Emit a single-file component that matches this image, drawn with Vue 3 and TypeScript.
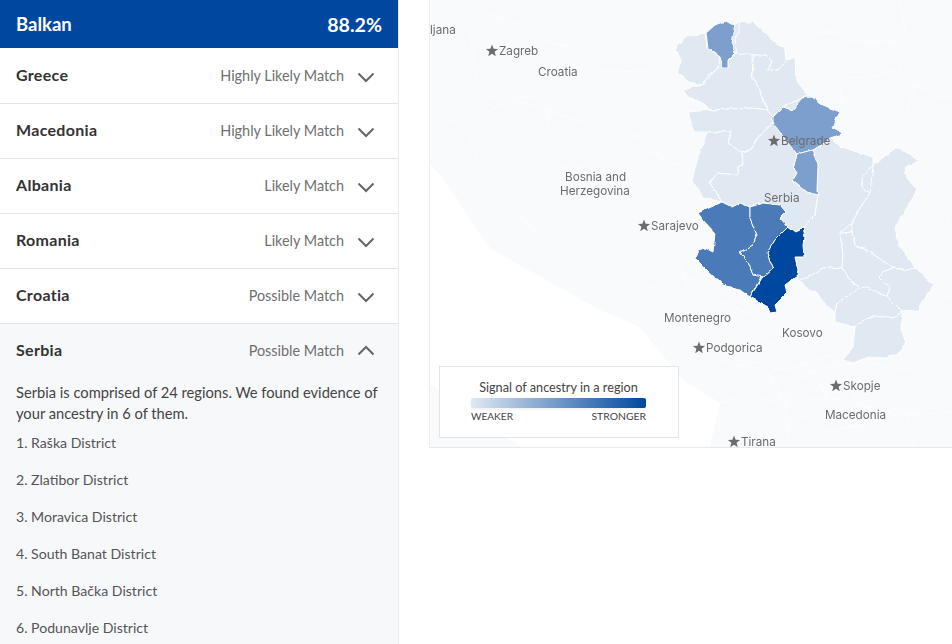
<template>
  <div class="page">
    <!-- 左侧列表 -->
    <aside class="panel">
      <div class="head">
        <span>Balkan</span>
        <span class="pct">88.2%</span>
      </div>
      <div v-for="row in rows" :key="row.name" class="row">
        <span class="name">{{ row.name }}</span>
        <span class="match">{{ row.match }}</span>
        <svg class="chev" width="18" height="11" viewBox="0 0 18 11">
          <path d="M1.5 1.5L9 9l7.5-7.5" />
        </svg>
      </div>
      <div class="open">
        <div class="row row-open">
          <span class="name">Serbia</span>
          <span class="match">Possible Match</span>
          <svg class="chev" width="18" height="11" viewBox="0 0 18 11">
            <path d="M1.5 9.5L9 2l7.5 7.5" />
          </svg>
        </div>
        <p class="intro">Serbia is comprised of 24 regions. We found evidence of your ancestry in 6 of them.</p>
        <ol class="districts">
          <li v-for="(d, i) in districts" :key="d">{{ i + 1 }}. {{ d }}</li>
        </ol>
      </div>
    </aside>

    <!-- 地图 -->
    <section class="map">
      <svg class="map-svg" width="522" height="447" viewBox="430 0 522 447">
        <defs>
          <filter id="wiggle" filterUnits="userSpaceOnUse" x="430" y="0" width="522" height="447" color-interpolation-filters="sRGB">
            <feTurbulence type="fractalNoise" baseFrequency="0.14" numOctaves="2" seed="4" />
            <feDisplacementMap in="SourceGraphic" scale="3.5" xChannelSelector="R" yChannelSelector="G" />
            <feGaussianBlur stdDeviation="0.3" />
          </filter>
        </defs>
        <rect x="430" y="0" width="522" height="447" fill="#f9fafc" />
        <path v-for="(s, i) in sea" :key="i" :d="s" fill="#fff" />
        <g filter="url(#wiggle)">
          <g class="border-lines">
            <polyline v-for="(l, i) in borders" :key="'b' + i" :points="l" class="border-line" />
          </g>
          <polygon :points="outline" :fill="fills.light" />
          <polygon v-for="r in regions" :key="r.id" :points="r.points" :fill="fills[r.level]" class="region" />
        </g>
        <g class="labels">
          <g v-for="c in cities" :key="c.name">
            <polygon :points="starPoints(c.x, c.y)" fill="#6c6c6c" />
            <text :x="c.x + 7" :y="c.y + 4" class="lbl">{{ c.name }}</text>
          </g>
          <text v-for="t in names" :key="t.name" :x="t.x" :y="t.y" class="lbl">{{ t.name }}</text>
          <text x="430" y="34" class="lbl">ljana</text>
        </g>
      </svg>
      <div class="legend">
        <div class="legend-title">Signal of ancestry in a region</div>
        <div class="legend-bar"></div>
        <div class="legend-ends">
          <span class="weaker">WEAKER</span>
          <span>STRONGER</span>
        </div>
      </div>
    </section>
  </div>
</template>

<script setup lang="ts">
interface Row {
  name: string
  match: string
}

interface Region {
  id: string
  level: 'light' | 'mid' | 'strong' | 'top'
  points: string
}

const rows: Row[] = [
  { name: 'Greece', match: 'Highly Likely Match' },
  { name: 'Macedonia', match: 'Highly Likely Match' },
  { name: 'Albania', match: 'Likely Match' },
  { name: 'Romania', match: 'Likely Match' },
  { name: 'Croatia', match: 'Possible Match' }
]

const districts = [
  'Raška District',
  'Zlatibor District',
  'Moravica District',
  'South Banat District',
  'North Bačka District',
  'Podunavlje District'
]

const fills = { light: '#e0e8f2', mid: '#7c9fcd', strong: '#4a7ab8', top: '#00479f' }

// 塞尔维亚整体轮廓，垫在各区下面
const outline =
  '685,37 705,33 715,25 725,21 735,25 740,22 753,22 767,35 785,50 786,60 795,57 796,80 808,95 812,97 823,105 840,112 832,127 843,133 832,138 837,145 857,152 873,157 873,165 893,150 900,148 920,162 908,165 903,173 917,190 910,203 895,227 900,247 915,267 933,285 918,310 902,312 901,330 905,343 900,353 887,358 868,357 853,363 843,360 853,347 855,327 835,322 835,312 825,305 817,293 805,287 799,280 797,276 785,285 787,293 775,305 750,297 740,290 723,285 710,273 695,258 698,250 705,248 713,252 715,233 703,220 698,213 722,202 703,197 692,180 698,157 707,132 693,132 692,125 688,112 710,110 703,103 688,97 683,90 702,85 690,82 677,73 682,60 675,50'

const regions: Region[] = [
  { id: 'westBacka', level: 'light', points: '675,50 685,37 705,33 707,48 720,57 718,68 707,77 702,85 690,82 677,73 682,60' },
  { id: 'northBanat', level: 'light', points: '735,43 740,22 753,22 767,35 785,50 786,60 778,70 767,70 772,62 767,55 753,55 737,53' },
  { id: 'southBacka', level: 'light', points: '683,90 702,85 718,68 720,57 728,60 737,53 753,55 752,57 753,78 760,90 767,110 753,108 710,110 703,103 688,97' },
  { id: 'centralBanat', level: 'light', points: '753,55 767,55 772,62 767,70 778,70 786,60 795,57 796,80 808,95 802,98 783,107 773,117 767,110 760,90 753,78' },
  { id: 'srem', level: 'light', points: '688,112 710,110 753,108 767,110 773,117 773,123 760,135 750,150 742,153 728,143 730,132 707,132 693,132 692,125' },
  { id: 'macva', level: 'light', points: '707,132 730,132 728,143 742,153 743,165 738,167 737,175 717,173 710,183 722,202 703,197 692,180 698,157' },
  { id: 'center', level: 'light', points: '742,153 750,150 760,135 773,123 787,142 797,154 794,165 797,173 793,180 807,192 818,195 815,215 803,227 795,232 788,227 780,218 786,212 780,205 763,203 750,207 740,203 732,207 722,202 710,183 717,173 737,175 738,167 743,165' },
  { id: 'east', level: 'light', points: '813,150 832,138 837,145 857,152 873,157 873,165 862,178 863,190 870,193 860,208 852,223 840,233 843,255 842,268 830,267 823,268 807,278 799,280 797,276 798,270 795,257 805,257 804,245 805,237 803,227 815,215 818,195 817,190 818,165' },
  { id: 'bor', level: 'light', points: '860,208 870,193 873,165 893,150 900,148 920,162 908,165 903,173 917,190 910,203 895,227 900,247 915,267 908,270 893,268 870,252 855,245 852,232 852,223' },
  { id: 'pirot', level: 'light', points: '882,272 893,268 908,270 915,267 933,285 918,310 902,312 887,297 890,288 880,278' },
  { id: 'nis', level: 'light', points: '840,233 852,232 855,245 870,252 893,268 882,272 880,278 890,288 887,297 867,287 860,288 850,280 842,268 843,255' },
  { id: 'toplica', level: 'light', points: '799,280 807,278 823,268 830,267 842,268 850,280 860,288 837,303 835,312 825,305 817,293 805,287' },
  { id: 'jablanica', level: 'light', points: '837,303 860,288 867,287 887,297 902,312 893,318 873,316 860,322 855,327 835,322 835,312' },
  { id: 'pcinja', level: 'light', points: '860,322 873,316 893,318 902,312 901,330 905,343 900,353 887,358 868,357 853,363 843,360 853,347 855,327' },
  { id: 'northBacka', level: 'mid', points: '725,21 735,25 731,43 735,53 728,60 728,67 723,67 720,57 708,48 706,33 715,25' },
  { id: 'southBanat', level: 'mid', points: '773,117 783,107 792,110 802,98 812,97 823,105 840,112 832,127 843,133 832,138 813,150 797,154 787,142 773,123' },
  { id: 'podunavlje', level: 'mid', points: '797,154 812,150 818,165 817,190 818,195 807,192 793,180 797,173 794,165' },
  { id: 'zlatibor', level: 'strong', points: '698,213 722,202 732,207 740,203 750,207 750,218 757,235 753,245 740,252 748,262 753,275 762,275 750,297 740,290 723,285 710,273 695,258 698,250 705,248 713,252 715,233 703,220' },
  { id: 'moravica', level: 'strong', points: '750,207 763,203 780,205 786,212 780,218 788,227 775,240 767,253 773,268 763,277 753,275 748,262 740,252 753,245 757,235 750,218' },
  { id: 'raska', level: 'top', points: '788,227 795,232 803,227 805,237 804,245 805,257 795,257 798,270 797,276 785,285 787,293 775,305 777,312 770,313 768,307 750,297 762,278 773,268 767,253 775,240' }
]

const sea = [
  'M430 163 L445 182 L458 200 L475 228 L492 250 L525 268 L558 287 L600 310 L640 327 L662 355 L683 380 L720 403 L715 425 L710 447 L523 447 L507 438 L470 415 L450 395 L430 385 Z'
]

const borders = [
  '793,10 790,20 817,33 840,32 853,42 893,42 905,53 898,68 873,78 847,77 840,90 843,107',
  '900,0 905,30 893,42',
  '898,68 915,85 940,98 952,96',
  '915,85 905,120 893,150',
  '470,30 490,14 520,25 540,40 570,47 600,70 640,72 665,62',
  '470,30 475,70 478,90 505,105 520,95 545,100 550,130 530,145 555,165 600,170 620,190 640,210',
  '430,115 465,125 480,165 500,190 520,215 545,240',
  '480,115 515,100 560,115 590,125',
  '600,110 630,135 660,140 680,112',
  '620,160 640,148 690,170',
  '622,225 640,250 680,262 690,300',
  '640,300 665,275 700,280 720,300 760,320 790,340',
  '690,355 730,362 770,375 785,405 790,447',
  '700,330 730,320 770,345 800,330',
  '740,360 790,370 830,355 845,375',
  '785,405 800,378 820,368 865,362 900,370 930,365 952,385',
  '780,395 840,400 900,415 952,412',
  '790,420 812,415 830,432 860,425 880,447',
  '815,375 825,395 820,415',
  '850,372 855,400 878,415 905,405 915,447',
  '720,403 750,395 785,405',
  '935,290 952,300',
  '920,180 945,210 952,230'
]

const cities = [
  { name: 'Zagreb', x: 492, y: 51 },
  { name: 'Belgrade', x: 774, y: 141 },
  { name: 'Sarajevo', x: 644, y: 226 },
  { name: 'Podgorica', x: 699, y: 348 },
  { name: 'Skopje', x: 836, y: 386 },
  { name: 'Tirana', x: 734, y: 442 }
]

const names = [
  { name: 'Croatia', x: 538, y: 76 },
  { name: 'Bosnia and', x: 565, y: 181 },
  { name: 'Herzegovina', x: 560, y: 195 },
  { name: 'Serbia', x: 764, y: 202 },
  { name: 'Montenegro', x: 664, y: 322 },
  { name: 'Kosovo', x: 782, y: 337 },
  { name: 'Macedonia', x: 825, y: 419 }
]

// 五角星顶点
const starPoints = (cx: number, cy: number): string => {
  const pts: string[] = []
  for (let i = 0; i < 10; i++) {
    const r = i % 2 === 0 ? 6.4 : 2.7
    const a = (Math.PI / 5) * i - Math.PI / 2
    pts.push(`${(cx + r * Math.cos(a)).toFixed(1)},${(cy + r * Math.sin(a)).toFixed(1)}`)
  }
  return pts.join(' ')
}
</script>

<style>
html,
body {
  background: #fff;
  overflow: hidden;
}
</style>

<style scoped>
.page {
  display: flex;
  align-items: flex-start;
  gap: 30px;
  width: 952px;
  height: 644px;
  overflow: hidden;
  font-family: Lato, "Open Sans", sans-serif;
  color: #333;
}

.panel {
  flex: 0 0 399px;
  box-sizing: border-box;
  height: 644px;
  border-right: 1px solid #e9ebed;
  overflow: hidden;
}

.head {
  display: flex;
  justify-content: space-between;
  align-items: center;
  height: 48px;
  margin-bottom: 1px;
  padding: 0 16px;
  background: #00479f;
  color: #fff;
  font-size: 18.5px;
  font-weight: 700;
}

.pct {
  font-size: 19.6px;
}

.row {
  display: flex;
  align-items: center;
  box-sizing: border-box;
  height: 55px;
  padding: 0 23px 2px 16px;
  border-bottom: 1px solid #e3e4e6;
}

.name {
  flex: 1;
  margin-bottom: 2px;
  font-size: 16px;
  font-weight: 700;
  color: #333;
  letter-spacing: 0.3px;
}

.match {
  font-size: 14.4px;
  color: #6f6f6f;
  margin-right: 13px;
}

.chev {
  margin-top: 4px;
  fill: none;
  stroke: #666;
  stroke-width: 2;
}

.open {
  background: #f7f8fa;
  height: 320px;
}

.row-open {
  border-bottom: 0;
}

.row-open .chev {
  margin-top: -1px;
}

.intro {
  margin: 0;
  padding: 3px 16px 0;
  font-size: 14.7px;
  line-height: 21px;
  color: #444;
}

.districts {
  list-style: none;
  margin: 8px 0 0;
  padding: 0 16px;
  font-size: 14.1px;
  color: #555;
}

.districts li {
  height: 37px;
  line-height: 21px;
}

.map {
  position: relative;
  flex: 0 0 523px;
  height: 448px;
  box-sizing: border-box;
  border-left: 1px solid #eceeef;
  border-bottom: 1px solid #e8e9ea;
}

.map-svg {
  display: block;
}

.region {
  stroke: #fff;
  stroke-width: 1;
  stroke-linejoin: round;
}

.border-lines {
  opacity: 0.7;
}

.border-line {
  fill: none;
  stroke: #fff;
  stroke-width: 1;
}

.labels {
  filter: blur(0.35px);
}

.lbl {
  font-family: Inter, "Open Sans", sans-serif;
  font-size: 11.7px;
  fill: #6c6c6c;
}

.legend {
  position: absolute;
  left: 9px;
  top: 366px;
  box-sizing: border-box;
  width: 240px;
  height: 72px;
  padding: 12px 32px 0 31px;
  background: #fff;
  border: 1px solid #e4e5e6;
  text-align: center;
}

.legend-title {
  font-size: 12.7px;
  line-height: 16px;
  color: #444;
}

.legend-bar {
  height: 10px;
  margin-top: 3px;
  border-radius: 2px;
  background: linear-gradient(90deg, #e0e8f2, #00479f);
  box-shadow: 0 1px 3px rgba(0, 0, 0, 0.08);
}

.legend-ends {
  display: flex;
  justify-content: space-between;
  margin-top: 2px;
  font-size: 10.4px;
  line-height: 13px;
  color: #444;
}

.weaker {
  font-size: 10.1px;
}
</style>
